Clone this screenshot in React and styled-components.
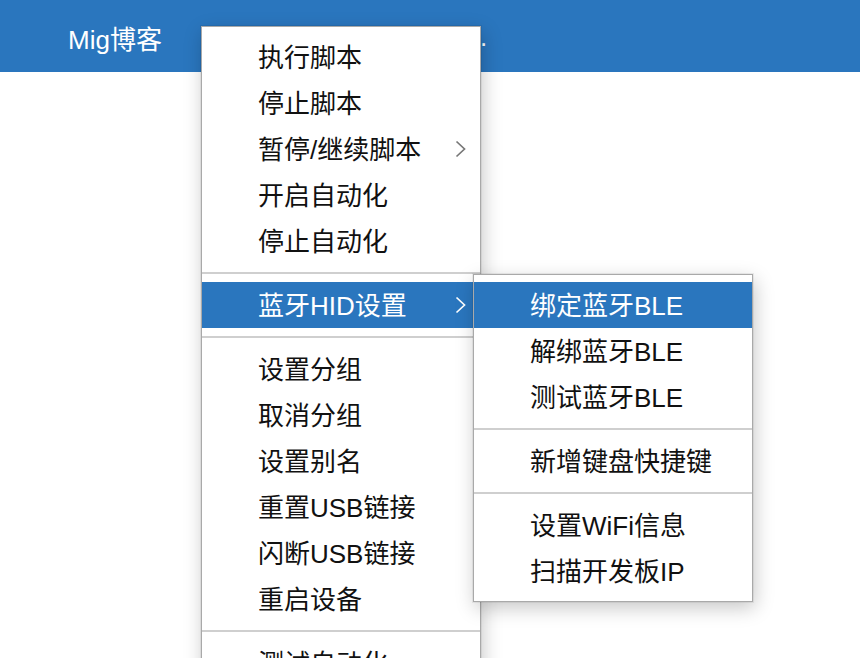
import styled, { createGlobalStyle } from "styled-components";

const blue = "#2a76be";
const fontStack = `"Liberation Sans", "Noto Sans CJK SC", sans-serif`;

const GlobalStyle = createGlobalStyle`
    html, body {
        margin: 0;
        padding: 0;
        height: 100%;
        overflow: hidden;
        background: #ffffff;
        font-family: ${fontStack};
    }
    #root {
        height: 100%;
    }
`;

const Page = styled.div`
    position: relative;
    height: 100%;
    background: #ffffff;
`;

const Header = styled.header`
    display: flex;
    align-items: center;
    height: 72px;
    padding-left: 68px;
    background: ${blue};
    color: #ffffff;
    font-size: 26px;
`;

const Title = styled.div`
    padding-top: 2px;
`;

const NavDot = styled.div`
    margin-left: 318px;
    padding-top: 2px;
`;

const Menu = styled.ul`
    position: absolute;
    left: ${props => props.left}px;
    top: ${props => props.top}px;
    width: 278px;
    margin: 0;
    padding: 7px 0;
    list-style: none;
    background: #ffffff;
    border: 1px solid #a9a9a9;
    box-shadow: 0 0 0 1px rgba(0, 0, 0, 0.06), 2px 6px 18px rgba(0, 0, 0, 0.22);
    z-index: ${props => props.layer || 1};
`;

const SubMenu = styled(Menu)`
    left: calc(100% - 7px);
    top: -8px;
`;

const Item = styled.li`
    position: relative;
    display: flex;
    align-items: center;
    justify-content: space-between;
    height: 46px;
    padding: 0 14px 0 56px;
    font-size: 26px;
    color: ${props => (props.active ? "#ffffff" : "#111111")};
    background: ${props => (props.active ? blue : "transparent")};
    white-space: nowrap;
`;

const Label = styled.span`
    line-height: 1;
    padding-top: 2px;
`;

const Separator = styled.li`
    height: 2px;
    margin: 8px 0;
    background: #cfcfcf;
`;

const Arrow = styled.svg`
    width: 11px;
    height: 18px;
    color: ${props => (props.active ? "#ffffff" : "#777777")};
`;

const Chevron = ({ active }) => (
    <Arrow active={active} viewBox="0 0 11 18">
        <polyline points="1.5,1.5 9.5,9 1.5,16.5" fill="none" stroke="currentColor" strokeWidth="1.7" />
    </Arrow>
);

const subItems = [
    { label: "绑定蓝牙BLE", active: true },
    { label: "解绑蓝牙BLE" },
    { label: "测试蓝牙BLE" },
    { sep: true },
    { label: "新增键盘快捷键" },
    { sep: true },
    { label: "设置WiFi信息" },
    { label: "扫描开发板IP" },
];

const mainItems = [
    { label: "执行脚本" },
    { label: "停止脚本" },
    { label: "暂停/继续脚本", arrow: true },
    { label: "开启自动化" },
    { label: "停止自动化" },
    { sep: true },
    { label: "蓝牙HID设置", arrow: true, active: true, sub: subItems },
    { sep: true },
    { label: "设置分组" },
    { label: "取消分组" },
    { label: "设置别名" },
    { label: "重置USB链接" },
    { label: "闪断USB链接" },
    { label: "重启设备" },
    { sep: true },
    { label: "测试自动化" },
];

function MenuRows({ items }) {
    return items.map((item, index) => {
        if (item.sep) return <Separator key={index} />;
        return (
            <Item key={index} active={item.active}>
                <Label>{item.label}</Label>
                {item.arrow && <Chevron active={item.active} />}
                {item.sub && (
                    <SubMenu layer={2}>
                        <MenuRows items={item.sub} />
                    </SubMenu>
                )}
            </Item>
        );
    });
}

export default function App() {
    return (
        <Page>
            <GlobalStyle />
            <Header>
                <Title>Mig博客</Title>
                <NavDot>.</NavDot>
            </Header>
            <Menu left={201} top={26}>
                <MenuRows items={mainItems} />
            </Menu>
        </Page>
    );
}
